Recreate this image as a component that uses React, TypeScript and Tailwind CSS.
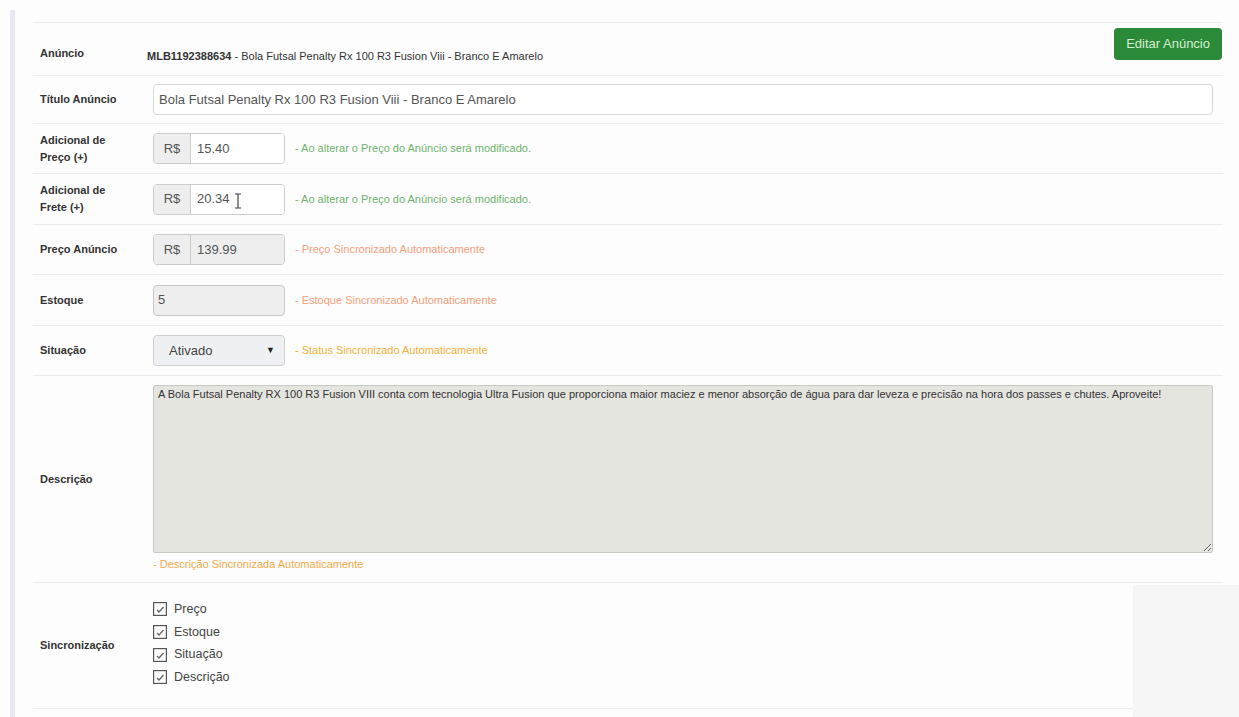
import type { ReactNode } from 'react'

const DESCRICAO =
  'A Bola Futsal Penalty RX 100 R3 Fusion VIII conta com tecnologia Ultra Fusion que proporciona maior maciez e menor absorção de água para dar leveza e precisão na hora dos passes e chutes. Aproveite!'

interface RowProps {
  label: string;
  height: string;
  children: ReactNode;
}

// One line of the ad form: bold label on the left, field on the right
function Row({ label, height, children }: RowProps) {
  return (
    <div className={`flex border-t border-[#ebebeb] ${height}`}>
      <div className="w-[114px] shrink-0 pl-[7px] flex items-center">
        <span className="w-[88px] text-[11px] leading-[17px] font-bold text-[#333]">{label}</span>
      </div>
      <div className="flex-1 min-w-0 flex items-center">{children}</div>
    </div>
  )
}

function Hint({ children, color }: { children: ReactNode; color: string }) {
  return <span className={`text-[11px] ml-[10px] ${color}`}>{children}</span>
}

function MoneyInput({ value, disabled, cursor }: { value: string; disabled?: boolean; cursor?: boolean }) {
  return (
    <div className="ml-[6px] flex w-[132px] h-[31px] border border-[#ccc] rounded-[4px] overflow-hidden text-[13px] text-[#555]">
      <div className="w-[37px] bg-[#eee] border-r border-[#ccc] flex items-center justify-center">R$</div>
      <div className={`flex-1 flex items-center pl-[6px] ${disabled ? 'bg-[#eee]' : 'bg-white'}`}>
        {value}
        {cursor && (
          <svg width="8" height="16" viewBox="0 0 8 16" className="ml-[4px] mt-[3px]">
            <path d="M1 1h6M4 1v14M1 15h6" stroke="#444" strokeWidth="1.2" fill="none" />
          </svg>
        )}
      </div>
    </div>
  )
}

function Check({ label }: { label: string }) {
  return (
    <div className="flex items-center h-[22.7px]">
      <svg width="14" height="14" viewBox="0 0 14 14" className="shrink-0">
        <rect x="0.6" y="0.6" width="12.8" height="12.8" fill="#fff" stroke="#555" strokeWidth="1.2" />
        <path d="M4 8l2 2 4.5-5" stroke="#666" strokeWidth="1.3" fill="none" />
      </svg>
      <span className="ml-[7px] text-[12.5px] text-[#444]">{label}</span>
    </div>
  )
}

export default function App() {
  return (
    <div className="relative flex min-h-[717px] bg-[#fdfdfd] font-['Liberation_Sans',Arial,sans-serif]">
      <div className="w-[5px] ml-[10px] mt-[10px] bg-[#e8e8f5] shrink-0" />

      <div className="flex-1 pl-[18px] pr-[16px] pt-[22px]">
        <div className="border-b border-[#ebebeb]">
          <div className="flex border-t border-[#ebebeb] h-[53px]">
            <div className="w-[114px] shrink-0 pl-[7px] flex items-center pt-[8px]">
              <span className="text-[11px] font-bold text-[#333]">Anúncio</span>
            </div>
            <div className="flex-1 flex items-start justify-between">
              <div className="mt-[25px] text-[11px] text-[#333]">
                <span className="font-bold">MLB1192388634</span> - Bola Futsal Penalty Rx 100 R3 Fusion Viii - Branco E Amarelo
              </div>
              <button className="mt-[5px] mr-[1px] h-[32px] px-[12px] rounded-[4px] bg-[#2b8a38] text-[13px] text-[#d4efd2]">
                Editar Anúncio
              </button>
            </div>
          </div>

          <Row label="Título Anúncio" height="h-[48px]">
            <div className="ml-[6px] mr-[10px] flex-1 h-[31px] border border-[#d8d8d8] rounded-[4px] bg-white flex items-center pl-[5px] text-[13px] text-[#555]">
              Bola Futsal Penalty Rx 100 R3 Fusion Viii - Branco E Amarelo
            </div>
          </Row>

          <Row label="Adicional de Preço (+)" height="h-[50px]">
            <MoneyInput value="15.40" />
            <Hint color="text-[#6db36d]">- Ao alterar o Preço do Anúncio será modificado.</Hint>
          </Row>

          <Row label="Adicional de Frete (+)" height="h-[51px]">
            <MoneyInput value="20.34" cursor />
            <Hint color="text-[#6db36d]">- Ao alterar o Preço do Anúncio será modificado.</Hint>
          </Row>

          <Row label="Preço Anúncio" height="h-[50px]">
            <MoneyInput value="139.99" disabled />
            <Hint color="text-[#f2a07a]">- Preço Sincronizado Automaticamente</Hint>
          </Row>

          <Row label="Estoque" height="h-[51px]">
            <div className="ml-[6px] w-[132px] h-[31px] border border-[#c8c8c8] rounded-[4px] bg-[#eee] flex items-center pl-[4px] text-[13px] text-[#555]">
              5
            </div>
            <Hint color="text-[#f2a07a]">- Estoque Sincronizado Automaticamente</Hint>
          </Row>

          <Row label="Situação" height="h-[50px]">
            <div className="ml-[6px] w-[132px] h-[31px] border border-[#d0d0d0] rounded-[4px] bg-[#eef0f3] flex items-center justify-between pl-[15px] pr-[9px] text-[13px] text-[#444]">
              <span>Ativado</span>
              <span className="text-[9px] text-[#222]">▼</span>
            </div>
            <Hint color="text-[#f4b13c]">- Status Sincronizado Automaticamente</Hint>
          </Row>

          <Row label="Descrição" height="h-[207px]">
            <div className="flex-1 self-start pt-[9px] pl-[6px] pr-[10px]">
              <textarea
                readOnly
                value={DESCRICAO}
                className="block w-full h-[168px] border border-[#c9c9c4] rounded-[2px] bg-[#e5e5e0] px-[4px] pt-[1px] text-[11px] leading-[14px] text-[#333] outline-none"
              />
              <div className="mt-[3px] text-[11px] text-[#f5a94a]">- Descrição Sincronizada Automaticamente</div>
            </div>
          </Row>

          <Row label="Sincronização" height="h-[126px]">
            <div className="ml-[6px] self-start mt-[15px]">
              <Check label="Preço" />
              <Check label="Estoque" />
              <Check label="Situação" />
              <Check label="Descrição" />
            </div>
          </Row>
        </div>
      </div>

      {/* floating panel stuck to the lower right corner */}
      <div className="absolute right-0 bottom-0 top-[585px] w-[106px] bg-[#f6f6f6]" />
    </div>
  )
}
